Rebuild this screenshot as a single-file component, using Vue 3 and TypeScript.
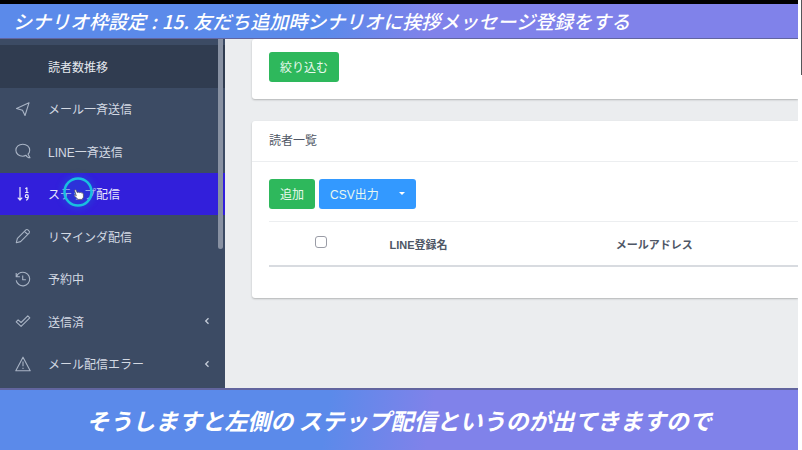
<script setup lang="ts">
import { ref } from 'vue'

interface MenuItem {
  label: string
  icon: string
  state?: 'parent' | 'active'
  expandable?: boolean
}

const items: MenuItem[] = [
  { label: '読者数推移', icon: '', state: 'parent' },
  { label: 'メール一斉送信', icon: 'send' },
  { label: 'LINE一斉送信', icon: 'chat' },
  { label: 'ステップ配信', icon: 'sort', state: 'active' },
  { label: 'リマインダ配信', icon: 'pencil' },
  { label: '予約中', icon: 'history' },
  { label: '送信済', icon: 'check', expandable: true },
  { label: 'メール配信エラー', icon: 'warning', expandable: true },
]

const allSelected = ref(false)
</script>

<template>
  <div class="player">
    <div class="stage">
      <h1 class="banner title">シナリオ枠設定<span class="colon">:</span>15. 友だち追加時シナリオに挨拶メッセージ登録をする</h1>

      <div class="screen">
        <nav class="sidebar" aria-label="メニュー">
          <ul class="menu">
            <li v-for="item in items" :key="item.label" class="entry">
              <a href="#" class="link" :class="item.state">
                <span class="icon">
                  <svg v-if="item.icon" viewBox="0 0 16 16" aria-hidden="true">
                    <path v-if="item.icon === 'send'" d="M14 1.800 1.500 7.500l6 1.800 2.500 5.200z" />
                    <path v-else-if="item.icon === 'chat'" d="M11 12.300C10.100 12.900 9 13.200 7.700 13.200 3.800 13.200.9 10.700.9 7.200S3.900 1.200 7.800 1.200s6.900 2.600 6.900 6c0 1.600-.6 2.900-1.700 3.900l2 3.700c-1.700 0-3.300-.9-4-2.500z" />
                    <g v-else-if="item.icon === 'sort'" class="strong">
                      <path d="M5 1v13M2.800 11.700l2.200 2.500 2.200-2.500M10.300 2.800l1.600-1v4.700M10.200 6.500h3.300" />
                      <path d="M13.300 10.200a1.500 1.500 0 1 1-3 0 1.500 1.500 0 0 1 3 0zc0 2.200-.6 3.600-2.200 4" />
                    </g>
                    <path v-else-if="item.icon === 'pencil'" d="m1.300 14.700 1.100-4.300 8.500-8.500c1.300-1.300 4.600 1.600 3.200 3.200l-8.500 8.500zM9.500 3.300l3.200 3.200" />
                    <path v-else-if="item.icon === 'history'" d="M1.200 2v3.700h3.700M1.600 5.500C2.500 3 5 1.300 7.900 1.300a6.800 6.800 0 1 1-6.700 8M7.700 4.400v4.300h3.200" />
                    <path v-else-if="item.icon === 'check'" d="m6.100 13.300-4.900-4.500 1.900-2 3 2.700 6.700-6.700 2 2z" />
                    <path v-else d="M8 1.200 15.200 14.700H.8zM8 5.500v4.700M8 11.700v1.200" />
                  </svg>
                </span>
                <span class="label">{{ item.label }}</span>
                <svg v-if="item.expandable" class="chevron" viewBox="0 0 6 8" aria-hidden="true">
                  <path d="M4.500 1.200 1.700 4l2.800 2.800" />
                </svg>
              </a>
              <span v-if="item.state === 'active'" class="pointer">
                <svg viewBox="0 0 32 32" aria-hidden="true">
                  <circle cx="16" cy="16" r="13.500" />
                  <path d="M14.300 19.800 12.700 15c-.4-1.300 1.100-1.700 1.600-.6l1 2.300c1-.8 1.900-.7 2.300 0 1-.6 1.700-.2 2 .4 1-.3 1.600.2 1.700 1l.2 3-1.400 2.300h-4l-3.600-3.300c-.7-1 .5-1.700 1.800-.3z" />
                </svg>
              </span>
            </li>
          </ul>
          <span class="scroll-thumb"></span>
        </nav>

        <main class="content">
          <section class="card filter">
            <button type="button" class="btn green">絞り込む</button>
          </section>

          <section class="card">
            <h2 class="card-title">読者一覧</h2>
            <div class="card-body">
              <div class="actions">
                <button type="button" class="btn green">追加</button>
                <button type="button" class="btn blue">CSV出力<span class="caret"></span></button>
              </div>
              <table class="readers">
                <thead>
                  <tr>
                    <th class="select"><input v-model="allSelected" type="checkbox" aria-label="すべて選択" /></th>
                    <th class="name">LINE登録名</th>
                    <th>メールアドレス</th>
                  </tr>
                </thead>
              </table>
            </div>
          </section>
        </main>
      </div>

      <p class="banner caption">そうしますと左側の ステップ配信というのが出てきますので</p>
    </div>
    <span class="page-thumb"></span>
  </div>
</template>

<style>
body {
  margin: 0;
  background: #fff;
}
</style>

<style scoped>
.player {
  display: flex;
  justify-content: space-between;
  min-height: 100vh;
  font-family: "Liberation Sans", "Noto Sans CJK JP", sans-serif;
  font-size: 12px;
}
.stage {
  flex: 1;
  min-width: 0;
  display: flex;
  flex-direction: column;
  border-top: 4px solid #000;
  margin-right: 3px;
  box-sizing: border-box;
}
.page-thumb {
  width: 1px;
  height: 75px;
  background: #55565a;
}
.banner {
  margin: 0;
  color: #fff;
  background: linear-gradient(100deg, #5b8aea 41%, #8082ea 54%);
  font-family: "Noto Sans CJK JP", sans-serif;
  font-style: italic;
  white-space: nowrap;
}
.title {
  padding: 0 13px;
  font-size: 19px;
  line-height: 34px;
  font-weight: 500;
  border-bottom: 1px solid #62659f;
}
.colon {
  padding: 0 5px;
}
.caption {
  padding-top: 1px;
  font-size: 23px;
  line-height: 59px;
  font-weight: 700;
  text-align: center;
  border-top: 2px solid #62659f;
}
.screen {
  flex: 1;
  display: flex;
  background: #ebedef;
  overflow: hidden;
}
.sidebar {
  position: relative;
  flex: none;
  width: 225px;
  padding: 6px 0 3px;
  box-sizing: border-box;
  background: #3c4b64;
}
.menu {
  height: 100%;
  margin: 0;
  padding: 0;
  list-style: none;
  display: grid;
  grid-auto-rows: 1fr;
}
.entry {
  position: relative;
  display: flex;
}
.link {
  flex: 1;
  display: flex;
  align-items: center;
  padding: 0 15px;
  color: #d3d9e3;
  text-decoration: none;
}
.link.parent {
  background: #303c50;
  color: #e4e8ee;
}
.link.active {
  background: #321fdb;
  color: #e8e8fb;
}
.icon {
  width: 16px;
  height: 16px;
  margin-right: 17px;
}
.icon svg {
  display: block;
  fill: none;
  stroke: #a9b4c5;
  stroke-width: 1.1;
  stroke-linejoin: round;
}
.icon .strong {
  stroke: #e8e8fb;
  stroke-width: 1.2;
}
.label {
  flex: 1;
}
.chevron {
  width: 6px;
  height: 8px;
  fill: none;
  stroke: #c4ccd8;
  stroke-width: 1.3;
}
.pointer {
  position: absolute;
  left: 62px;
  top: 3px;
  width: 32px;
  height: 32px;
  border-radius: 50%;
  background: #2450d866;
  box-shadow: 0 0 5px 2px #2450d866;
}
.pointer svg {
  display: block;
}
.pointer circle {
  fill: none;
  stroke: #19bfe0;
  stroke-width: 2.5;
}
.pointer path {
  fill: #fff;
  stroke: #555566;
  stroke-width: 0.8;
}
.scroll-thumb {
  position: absolute;
  top: 0;
  right: 2px;
  width: 5px;
  height: 210px;
  border-radius: 0 0 3px 3px;
  background: #8891a2;
}
.content {
  flex: 1;
  min-width: 0;
  padding-left: 27px;
  display: flex;
  flex-direction: column;
  gap: 22px;
}
.card {
  background: #fff;
  border-radius: 3px 0 0 3px;
  box-shadow: 0 1px 2px #0000003d;
}
.filter {
  padding: 13px 17px 17px;
}
.btn {
  height: 30px;
  padding: 0 11px 2px;
  border: 0;
  border-radius: 3px;
  color: #e9f8ef;
  font: inherit;
}
.green {
  background: #2eb85c;
}
.blue {
  display: flex;
  align-items: center;
  gap: 20px;
  background: #3399ff;
}
.caret {
  border: 3px solid transparent;
  border-top-color: #fff;
  border-bottom: 0;
}
.card-title {
  margin: 0;
  padding: 0 17px;
  font-size: 12px;
  line-height: 40px;
  font-weight: 400;
  color: #4f5766;
  border-bottom: 1px solid #eceef0;
}
.card-body {
  padding: 17px 0 31px 17px;
}
.actions {
  display: flex;
  gap: 4px;
  margin-bottom: 12px;
}
/* The table runs past the right edge of the visible area. */
.readers {
  width: calc(100% + 46px);
  table-layout: fixed;
  border-collapse: collapse;
  color: #4f5766;
  font-size: 11px;
}
.readers th {
  height: 43px;
  padding: 0;
  border-top: 1px solid #eceef0;
  border-bottom: 2px solid #d8dbe0;
}
.readers .select {
  width: 18%;
}
.readers .name {
  width: 16%;
}
.readers input {
  appearance: none;
  display: block;
  width: 12px;
  height: 12px;
  margin: 0 auto 3px;
  border: 1px solid #9a9ca6;
  border-radius: 3px;
  background: #fff;
}
.readers input:checked {
  background: #321fdb;
}
</style>
